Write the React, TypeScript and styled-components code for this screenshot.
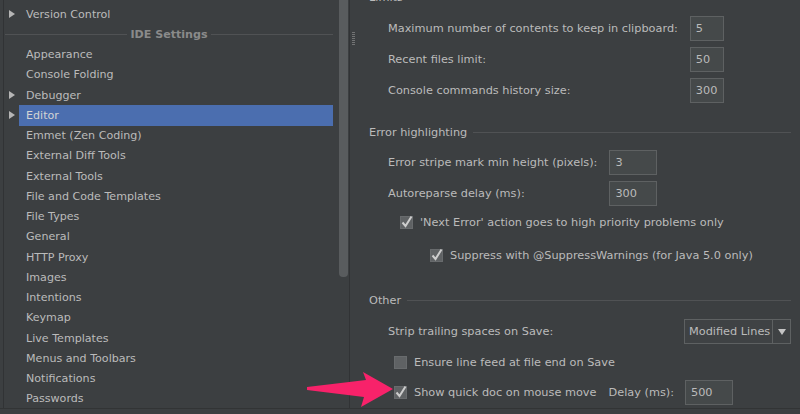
import React from 'react';
import styled, { createGlobalStyle } from 'styled-components';

const TEXT = '#bbbbbb';
const BG = '#3c3f41';

const GlobalStyle = createGlobalStyle`
    html, body {
        margin: 0;
        padding: 0;
        background: ${BG};
        overflow: hidden;
    }
    body {
        font-family: 'DejaVu Sans', 'Noto Sans', sans-serif;
        font-size: 11.3px;
        color: ${TEXT};
    }
`;

const Screen = styled.div`
    position: relative;
    width: 800px;
    height: 414px;
    background: ${BG};
    overflow: hidden;
`;

const Main = styled.div`
    display: flex;
    height: 409px;
    border-bottom: 1px solid #323435;
    box-sizing: border-box;
`;

const LeftPanel = styled.div`
    display: flex;
    margin-left: 3px;
    width: 347px;
    border-left: 1px solid #313335;
    border-right: 1px solid #313335;
    box-sizing: border-box;
`;

const Tree = styled.ul`
    flex: 1;
    list-style: none;
    margin: 0;
    padding: 4px 0 0 0;
    font-size: 11.1px;
`;

const TreeRow = styled.li`
    display: flex;
    align-items: stretch;
    height: 20.25px;
`;

const Toggle = styled.span<{ $open?: boolean }>`
    width: 15px;
    display: flex;
    align-items: center;
    padding-left: 5px;
    box-sizing: border-box;

    &::before {
        content: '';
        display: ${(p) => (p.$open ? 'block' : 'none')};
        border-left: 6px solid #b5b5b5;
        border-top: 4px solid transparent;
        border-bottom: 4px solid transparent;
    }
`;

const Label = styled.span<{ $selected?: boolean }>`
    flex: 1;
    display: flex;
    align-items: center;
    margin-right: 5px;
    padding-left: 7px;
    white-space: nowrap;
    background: ${(p) => (p.$selected ? '#4b6eaf' : 'transparent')};
    color: ${(p) => (p.$selected ? '#d4d4d4' : TEXT)};
`;

const GroupRow = styled.li`
    display: flex;
    align-items: center;
    gap: 3px;
    height: 20.25px;
    padding-left: 1px;
    padding-right: 5px;
    color: #8a8a8a;
    font-weight: bold;

    &::before,
    &::after {
        content: '';
        flex: 1;
        height: 1px;
        background: #505254;
    }
`;

const ScrollTrack = styled.div`
    width: 11px;
    padding-left: 1px;
    box-sizing: border-box;
`;

const ScrollThumb = styled.div`
    width: 9px;
    height: 277px;
    background: #595c5e;
    border-radius: 0 0 4px 4px;
`;

const Splitter = styled.div`
    width: 6px;
    display: flex;
    justify-content: center;
`;

const Grip = styled.div`
    margin-top: 32px;
    width: 3px;
    height: 14px;
    background: repeating-linear-gradient(to bottom, #8a8a8a 0 1px, transparent 1px 2px);
    opacity: 0.7;
`;

const RightPanel = styled.div`
    flex: 1;
    padding: 0 9px 0 13px;
    display: flex;
    flex-direction: column;
    overflow: hidden;
`;

const TitleRow = styled.div<{ $mt: number }>`
    display: flex;
    align-items: center;
    gap: 6px;
    height: 18px;
    margin-top: ${(p) => p.$mt}px;
    white-space: nowrap;

    &::after {
        content: '';
        flex: 1;
        height: 1px;
        background: #505254;
    }
`;

const Body = styled.div`
    display: flex;
    flex-direction: column;
    padding-left: 19px;
`;

const FieldGrid = styled.div<{ $mt: number }>`
    display: grid;
    grid-template-columns: max-content max-content;
    column-gap: 12px;
    row-gap: 6px;
    align-items: center;
    margin-top: ${(p) => p.$mt}px;
`;

const Input = styled.div<{ $w: number }>`
    width: ${(p) => p.$w}px;
    height: 25px;
    box-sizing: border-box;
    border: 1px solid #5e6162;
    background: #45494a;
    padding-left: 5px;
    display: flex;
    align-items: center;
`;

const CheckRow = styled.div<{ $mt: number; $indent: number; $h?: number }>`
    display: flex;
    align-items: center;
    gap: 7px;
    height: ${(p) => p.$h ?? 20}px;
    margin-top: ${(p) => p.$mt}px;
    margin-left: ${(p) => p.$indent}px;
    white-space: nowrap;
`;

const FieldRow = styled.div<{ $mt: number }>`
    display: flex;
    align-items: center;
    justify-content: space-between;
    height: 25px;
    margin-top: ${(p) => p.$mt}px;
`;

const Combo = styled.div`
    display: flex;
    width: 107px;
    height: 25px;
    box-sizing: border-box;
    border: 1px solid #5e6162;
    background: #3f4244;
`;

const ComboValue = styled.span`
    flex: 1;
    display: flex;
    align-items: center;
    padding-left: 4px;
    white-space: nowrap;
    overflow: hidden;
    border-right: 1px solid #5e6162;
`;

const ComboArrow = styled.span`
    width: 17px;
    display: flex;
    align-items: center;
    justify-content: center;

    &::before {
        content: '';
        border-top: 6px solid #c4c4c4;
        border-left: 4px solid transparent;
        border-right: 4px solid transparent;
    }
`;

const DelayLabel = styled.span`
    margin-left: 5px;
    margin-right: 4px;
`;

const Pointer = styled.svg`
    position: absolute;
    left: 300px;
    top: 365px;
`;

const CheckBox: React.FC<{ checked?: boolean }> = ({ checked }) => (
    <svg width="13" height="14" viewBox="0 0 13 14">
        <rect x="0.5" y="1.5" width="12" height="12" fill="#5f6264" stroke="#686b6d" />
        {checked && <path d="M2.5 7.5 L5.5 11 L11.5 1.5" fill="none" stroke="#cdcdcd" strokeWidth="2" />}
    </svg>
);

const treeItems: { name: string; open?: boolean; selected?: boolean; group?: boolean }[] = [
    { name: 'Version Control', open: true },
    { name: 'IDE Settings', group: true },
    { name: 'Appearance' },
    { name: 'Console Folding' },
    { name: 'Debugger', open: true },
    { name: 'Editor', open: true, selected: true },
    { name: 'Emmet (Zen Coding)' },
    { name: 'External Diff Tools' },
    { name: 'External Tools' },
    { name: 'File and Code Templates' },
    { name: 'File Types' },
    { name: 'General' },
    { name: 'HTTP Proxy' },
    { name: 'Images' },
    { name: 'Intentions' },
    { name: 'Keymap' },
    { name: 'Live Templates' },
    { name: 'Menus and Toolbars' },
    { name: 'Notifications' },
    { name: 'Passwords' },
];

export default function App() {
    return (
        <Screen>
            <GlobalStyle />
            <Main>
                <LeftPanel>
                    <Tree>
                        {treeItems.map((item) =>
                            item.group ? (
                                <GroupRow key={item.name}>{item.name}</GroupRow>
                            ) : (
                                <TreeRow key={item.name}>
                                    <Toggle $open={item.open} />
                                    <Label $selected={item.selected}>{item.name}</Label>
                                </TreeRow>
                            )
                        )}
                    </Tree>
                    <ScrollTrack>
                        <ScrollThumb />
                    </ScrollTrack>
                </LeftPanel>
                <Splitter>
                    <Grip />
                </Splitter>
                <RightPanel>
                    <TitleRow $mt={-12}>Limits</TitleRow>
                    <Body>
                        <FieldGrid $mt={10}>
                            <span>Maximum number of contents to keep in clipboard:</span>
                            <Input $w={34}>5</Input>
                            <span>Recent files limit:</span>
                            <Input $w={34}>50</Input>
                            <span>Console commands history size:</span>
                            <Input $w={34}>300</Input>
                        </FieldGrid>
                    </Body>

                    <TitleRow $mt={20}>Error highlighting</TitleRow>
                    <Body>
                        <FieldGrid $mt={9}>
                            <span>Error stripe mark min height (pixels):</span>
                            <Input $w={48}>3</Input>
                            <span>Autoreparse delay (ms):</span>
                            <Input $w={48}>300</Input>
                        </FieldGrid>
                        <CheckRow $mt={6} $indent={12}>
                            <CheckBox checked />
                            'Next Error' action goes to high priority problems only
                        </CheckRow>
                        <CheckRow $mt={13} $indent={42}>
                            <CheckBox checked />
                            Suppress with @SuppressWarnings (for Java 5.0 only)
                        </CheckRow>
                    </Body>

                    <TitleRow $mt={26}>Other</TitleRow>
                    <Body>
                        <FieldRow $mt={10}>
                            <span>Strip trailing spaces on Save:</span>
                            <Combo>
                                <ComboValue>Modified Lines</ComboValue>
                                <ComboArrow />
                            </Combo>
                        </FieldRow>
                        <CheckRow $mt={8} $indent={6}>
                            <CheckBox />
                            Ensure line feed at file end on Save
                        </CheckRow>
                        <CheckRow $mt={8} $indent={6} $h={24}>
                            <CheckBox checked />
                            Show quick doc on mouse move
                            <DelayLabel>Delay (ms):</DelayLabel>
                            <Input $w={48}>500</Input>
                        </CheckRow>
                    </Body>
                </RightPanel>
            </Main>
            <Pointer width="100" height="50" viewBox="0 0 100 50">
                <polygon points="7,22 66,15 63,7 93,24 61,42 64,32 7,25" fill="#f8226a" />
            </Pointer>
        </Screen>
    );
}
